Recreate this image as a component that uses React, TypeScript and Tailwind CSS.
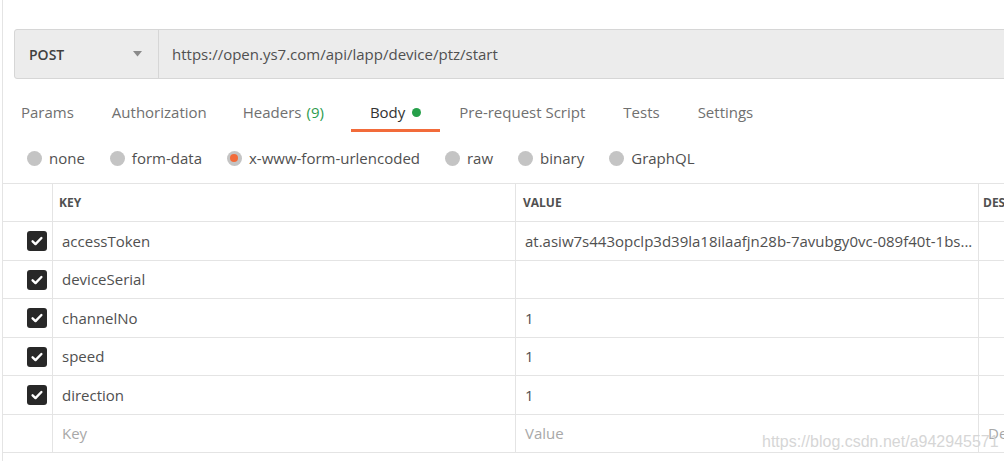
import React from 'react'

const tabs = [
  { label: 'Params' },
  { label: 'Authorization' },
  { label: 'Headers', count: '(9)' },
  { label: 'Body', active: true },
  { label: 'Pre-request Script' },
  { label: 'Tests' },
  { label: 'Settings' },
]

const bodyTypes = ['none', 'form-data', 'x-www-form-urlencoded', 'raw', 'binary', 'GraphQL']

const rows = [
  { key: 'accessToken', value: 'at.asiw7s443opclp3d39la18ilaafjn28b-7avubgy0vc-089f40t-1bs...', h: 'h-[39px]' },
  { key: 'deviceSerial', value: '', h: 'h-[38px]' },
  { key: 'channelNo', value: '1', h: 'h-[39px]' },
  { key: 'speed', value: '1', h: 'h-[38px]' },
  { key: 'direction', value: '1', h: 'h-[39px]' },
]

function Check() {
  return (
    <div className="w-[20px] h-[20px] rounded-[3px] bg-[#282828] flex items-center justify-center">
      <svg width="14" height="14" viewBox="0 0 14 14">
        <path d="M2.6 7.3l2.9 2.8L11.4 4" fill="none" stroke="#fff" strokeWidth="2.4" strokeLinecap="round" strokeLinejoin="round" />
      </svg>
    </div>
  )
}

export default function App() {
  return (
    <div className="w-[1004px] h-[461px] bg-white overflow-hidden relative font-['Open_Sans',sans-serif]">
      <div className="ml-[2px] h-full border-l border-[#e4e4e4] pt-[29px]">
        {/* url bar */}
        <div className="flex w-[1100px] h-[50px] ml-[11px] border border-[#d6d6d6] rounded-l-[3px] bg-[#ececec]">
          <div className="w-[144px] flex items-center justify-between pl-[14px] pr-[16px] border-r border-[#d6d6d6]">
            <span className="text-[14px] font-semibold text-[#404040]">POST</span>
            <svg width="9" height="6" viewBox="0 0 9 6">
              <path d="M0 0h9L4.5 5.5z" fill="#8a8a8a" />
            </svg>
          </div>
          <div className="flex items-center pl-[13px] text-[15px] text-[#505050]">
            https://open.ys7.com/api/lapp/device/ptz/start
          </div>
        </div>

        {/* tabs */}
        <div className="flex mt-[13px] h-[40px] -ml-[1px]">
          {tabs.map((t) => (
            <div
              key={t.label}
              className={`flex items-center px-[19px] pt-[3px] border-b-[3px] text-[15px] ${
                t.active ? 'border-[#f26b3a] text-[#333333]' : 'border-transparent text-[#707070]'
              } ${t.label === 'Authorization' ? 'pr-[17px]' : ''} ${t.count ? 'mr-[8px]' : ''}`}
            >
              <span>{t.label}</span>
              {t.count && <span className="ml-[5px] text-[#2e9c4f]">{t.count}</span>}
              {t.active && <span className="ml-[7px] w-[9px] h-[9px] rounded-full bg-[#26a04a]" />}
            </div>
          ))}
        </div>

        {/* body types */}
        <div className="flex items-center gap-[25px] mt-[8px] h-[36px] pl-[24px]">
          {bodyTypes.map((b) => (
            <div key={b} className="flex items-center gap-[7px]">
              <span className="w-[15px] h-[15px] rounded-full bg-[#c4c4c4] flex items-center justify-center">
                {b === 'x-www-form-urlencoded' && <span className="w-[8px] h-[8px] rounded-full bg-[#f26b3a]" />}
              </span>
              <span className="text-[15px] text-[#505050]">{b}</span>
            </div>
          ))}
        </div>

        {/* table */}
        <div className="mt-[7px] border-t border-[#e4e4e4] w-[1300px] text-[15px]">
          <div className="flex h-[38px] border-b border-[#e4e4e4] text-[12px] font-bold text-[#505050]">
            <div className="w-[50px] border-r border-[#e4e4e4]" />
            <div className="w-[463px] border-r border-[#e4e4e4] flex items-center pl-[6px]">KEY</div>
            <div className="w-[463px] border-r border-[#e4e4e4] flex items-center pl-[7px]">VALUE</div>
            <div className="flex-1 flex items-center pl-[4px]">DESCRIPTION</div>
          </div>
          {rows.map((r) => (
            <div key={r.key} className={`flex ${r.h} border-b border-[#e4e4e4] text-[#505050]`}>
              <div className="w-[50px] border-r border-[#e4e4e4] flex items-center justify-end pr-[5px]">
                <Check />
              </div>
              <div className="w-[463px] border-r border-[#e4e4e4] flex items-center pl-[9px]">{r.key}</div>
              <div className="w-[463px] border-r border-[#e4e4e4] flex items-center pl-[9px] pr-[6px] overflow-hidden whitespace-nowrap">
                {r.value}
              </div>
              <div className="flex-1" />
            </div>
          ))}
          <div className="flex h-[38px] border-b border-[#e4e4e4] text-[#a8a8a8]">
            <div className="w-[50px] border-r border-[#e4e4e4]" />
            <div className="w-[463px] border-r border-[#e4e4e4] flex items-center pl-[9px]">Key</div>
            <div className="w-[463px] border-r border-[#e4e4e4] flex items-center pl-[9px]">Value</div>
            <div className="flex-1 flex items-center pl-[9px]">Description</div>
          </div>
        </div>
      </div>

      <div className="absolute left-[762px] top-[430px] text-[16px] text-[#d6d6d6] font-['Liberation_Sans',Arial,sans-serif] whitespace-nowrap">
        https://blog.csdn.net/a942945571
      </div>
    </div>
  )
}
